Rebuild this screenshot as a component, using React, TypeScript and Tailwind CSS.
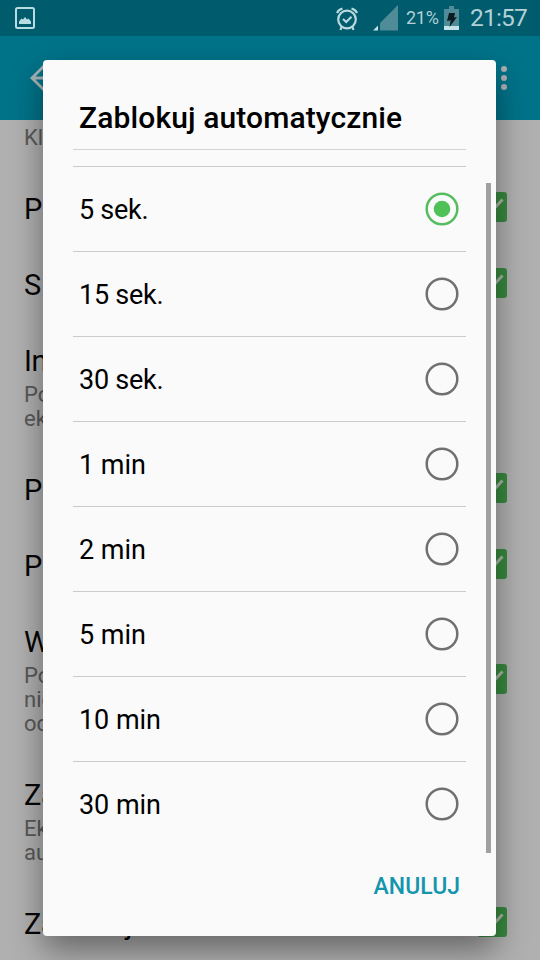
const rows: { title: string; lines?: string[]; check?: boolean }[] = [
  { title: 'P', check: true },
  { title: 'S', check: true },
  { title: 'In', lines: ['Po', 'ek'] },
  { title: 'P', check: true },
  { title: 'P', check: true },
  { title: 'W', lines: ['Po', 'nie', 'od'], check: true },
  { title: 'Za', lines: ['Ek', 'au'] },
  { title: 'Zablokuj', check: true },
];

const options = ['5 sek.', '15 sek.', '30 sek.', '1 min', '2 min', '5 min', '10 min', '30 min'];

function StatusBar() {
  return (
    <div className="flex h-9 shrink-0 items-center bg-[#005b6d] text-[#b2d0d6]">
      <svg className="ml-[15px]" width="20" height="22" viewBox="0 0 20 22">
        <rect x="1" y="1" width="18" height="20" rx="1.5" fill="none" stroke="#b7dce2" strokeWidth="2" />
        <path d="M4 17v-2.500l2.500-3 1.500 1 2-2.500 2 2.500 1.500-1L16 14.500V17z" fill="#b7dce2" />
      </svg>
      <svg className="mt-[2px] ml-auto" width="22" height="24" viewBox="0 0 22 24" fill="none" stroke="#b9d9df" strokeWidth="2.200">
        <circle cx="11" cy="12.500" r="8.800" />
        <path d="M1 6Q2.500 2.500 6.500 1.500M21 6Q19.500 2.500 15.500 1.500M5.500 20L4.500 23M16.500 20L17.500 23M7 12l3.200 3 5.300-5.300" />
      </svg>
      <svg className="ml-[15px]" width="26" height="26" viewBox="0 0 26 26">
        <path d="M25 0v25.500H7V18z" fill="#4f8c98" />
        <path d="M5 20.500v5H0z" fill="#c2e3e8" />
      </svg>
      <span className="ml-[7px] w-[35px] whitespace-nowrap text-[18px] leading-9 tracking-[-0.3px]">21%</span>
      <svg className="ml-[3px]" width="16" height="25" viewBox="0 0 16 25">
        <path d="M5 0h5v3h5v18H0V3h5z" fill="#4f8c98" />
        <path d="M0 20h15v4H0z" fill="#c2e3e8" />
        <path d="M5 7h6l-1 4.500 3-.5-7.500 10 1.200-6.800-3.700.8z" fill="#0b1c20" />
      </svg>
      <span className="mr-[12px] ml-[10px] w-[58px] whitespace-nowrap text-[24.500px] leading-[38px] tracking-[-0.8px]">21:57</span>
    </div>
  );
}

function Check() {
  return (
    <svg className="mr-[33px] -mt-[4px] ml-auto self-center" width="30" height="30" viewBox="0 0 30 30">
      <rect width="30" height="30" rx="3" fill="#38893e" />
      <path d="M6 15l6.500 6.500L25.500 7.500" fill="none" stroke="#aab5a9" strokeWidth="3" />
    </svg>
  );
}

export default function App() {
  return (
    <div className="relative h-[960px] w-[540px] overflow-hidden bg-[#b0b0b0] font-[Roboto,sans-serif]">
      <div className="flex h-full flex-col">
        <StatusBar />
        <div className="flex h-[84px] shrink-0 items-center bg-[#007389]">
          <svg className="ml-[30px]" width="28" height="26" viewBox="0 0 28 26" fill="none" stroke="#a9b5b9" strokeWidth="2.800">
            <path d="M14 1L2 13l12 12M2 13h25" />
          </svg>
          <div className="mr-[33px] ml-auto flex flex-col gap-[3px]">
            <i className="size-[6px] rounded-full bg-[#afafb4]" />
            <i className="size-[6px] rounded-full bg-[#afafb4]" />
            <i className="size-[6px] rounded-full bg-[#afafb4]" />
          </div>
        </div>
        <div className="h-[51px] shrink-0 pt-[5px] pl-6 text-[22px] leading-[26px] text-[#595959]">Kl</div>
        {rows.map((row, i) => (
          <div key={i} className="flex shrink-0 pl-6">
            <div className={row.lines ? 'pt-[19px] pb-[21px]' : 'py-[19px]'}>
              <div className="text-[29px] leading-[38px] tracking-[-0.3px] text-[#050505]">{row.title}</div>
              {row.lines && (
                <div className="pt-[3px] text-[22px] leading-6 text-[#595959]">
                  {row.lines.map((line) => (
                    <div key={line}>{line}</div>
                  ))}
                </div>
              )}
            </div>
            {row.check && <Check />}
          </div>
        ))}
      </div>

      <div className="absolute top-[60px] left-[43px] flex h-[876px] w-[453px] flex-col rounded-[4px] bg-[#fafafa] shadow-[0_14px_32px_rgba(0,0,0,0.42)]">
        <h1 className="mx-[30px] h-[90px] shrink-0 border-b border-[#d2d2d2] pt-[38px] pl-[6px] text-[30px] leading-10 font-medium tracking-[0.12px] whitespace-nowrap text-black">
          Zablokuj automatycznie
        </h1>
        <div className="flex h-[703px] shrink-0">
          <ul className="ml-[30px] w-[393px] pt-4">
            {options.map((label, i) => (
              <li key={label} className="flex h-[85px] items-center justify-between border-t border-[#cacaca] pr-[7px] pl-[6px] text-[27px] text-black">
                <span className={label.endsWith('sek.') ? 'pt-[3px] tracking-[-0.25px]' : 'pt-[3px] tracking-[-0.05px]'}>{label}</span>
                <svg width="34" height="34" viewBox="0 0 34 34">
                  <circle cx="17" cy="17" r="15.300" fill="none" stroke={i === 0 ? '#55bd5f' : '#707070'} strokeWidth="2.500" />
                  {i === 0 && <circle cx="17" cy="17" r="8.300" fill="#50c158" />}
                </svg>
              </li>
            ))}
          </ul>
          <div className="mt-[33px] ml-[20px] h-[670px] w-[5px] bg-[#a0a0a0]" />
        </div>
        <button className="mt-[18px] mr-[36px] self-end text-[23px] leading-8 font-medium text-[#1295ad]">ANULUJ</button>
      </div>
    </div>
  );
}
